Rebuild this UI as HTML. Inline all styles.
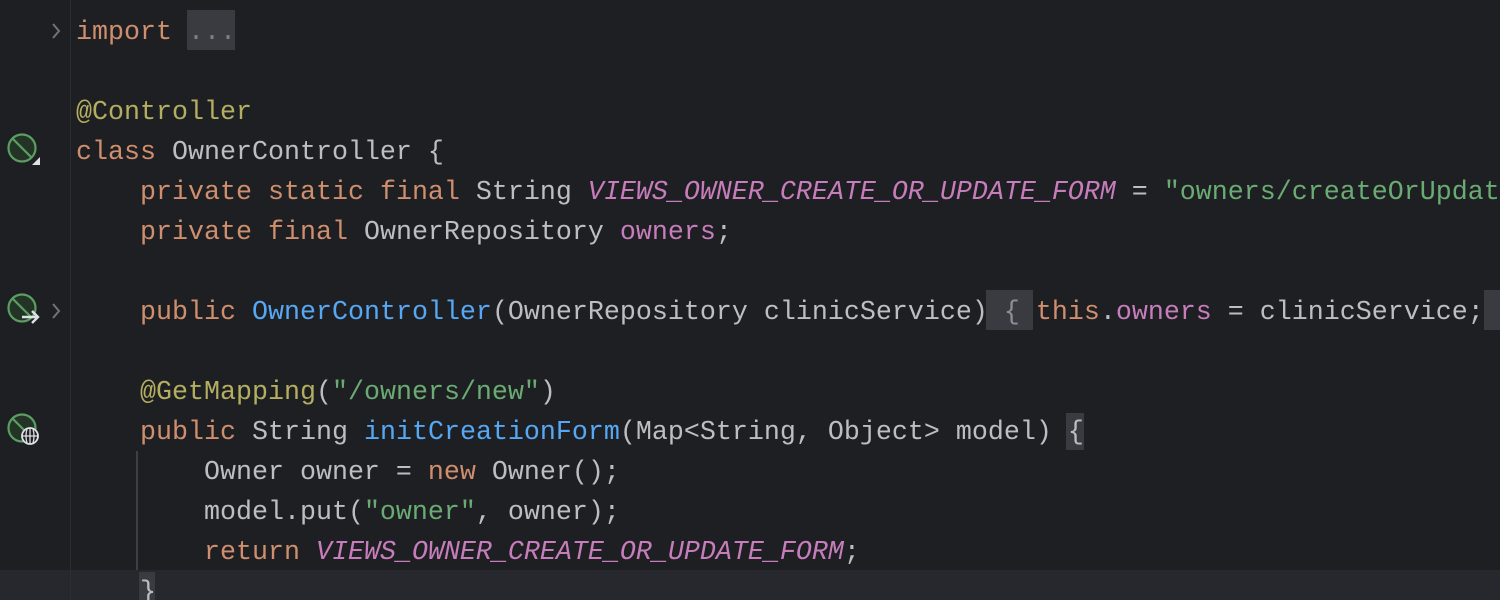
<!DOCTYPE html>
<html><head><meta charset="utf-8"><style>
html,body{margin:0;padding:0;width:1500px;height:600px;overflow:hidden;}
body{background:#1e1f22;position:relative;font-family:"Liberation Mono",monospace;}
.wrap{position:absolute;left:0;top:0;width:1500px;height:600px;overflow:hidden;}
.gut{position:absolute;left:0;top:0;width:70px;height:600px;background:#1e1f22;}
.div{position:absolute;left:70px;top:0;width:1px;height:600px;background:#2b2d30;}
.cur{position:absolute;left:0;top:570px;width:1500px;height:30px;background:#26282e;}
.l{position:absolute;left:76px;height:40px;line-height:40px;font-size:26.67px;color:#bcbec4;white-space:pre;}
.k{color:#cf8e6d}.a{color:#b3ae60}.c{color:#c77dbb;font-style:italic}.s{color:#6aab73}.f{color:#56a8f5}.p{color:#c77dbb}
.box{position:absolute;background:#393b40;}
.guide{position:absolute;left:136px;top:451px;width:2px;height:119px;background:#3d3f44;}
svg{position:absolute;}
</style></head><body><div class="wrap">
<div class="gut"></div>
<div class="cur"></div>
<div class="div"></div>
<div class="box" style="left:187px;top:10px;width:48px;height:40px"></div>
<div class="box" style="left:986px;top:290px;width:47px;height:40px"></div>
<div class="box" style="left:1484px;top:290px;width:16px;height:40px"></div>
<div class="box" style="left:1066px;top:413px;width:18px;height:37px"></div>
<div class="box" style="left:139px;top:572px;width:16px;height:28px"></div>
<div class="guide"></div>

<svg style="left:48px;top:20px" width="16" height="22"><path d="M5 4 L11 11 L5 18" stroke="#6f737a" stroke-width="2" fill="none"/></svg>
<svg style="left:48px;top:300px" width="16" height="22"><path d="M5 4 L11 11 L5 18" stroke="#6f737a" stroke-width="2" fill="none"/></svg>

<svg style="left:6px;top:132px" width="36" height="36"><circle cx="16" cy="16" r="13.5" fill="#233326" stroke="#5a9e63" stroke-width="2.2"/><path d="M7 7 L25 25" stroke="#5a9e63" stroke-width="2.2"/><path d="M34 25 L34 33 L26 33 Z" fill="#dfe1e5"/></svg>
<svg style="left:6px;top:292px" width="36" height="36"><circle cx="16" cy="16" r="13.5" fill="#233326" stroke="#5a9e63" stroke-width="2.2"/><path d="M7 7 L25 25" stroke="#5a9e63" stroke-width="2.2"/><path d="M16 25 H32 M26 19 L32 25 L26 31" stroke="#dfe1e5" stroke-width="2.4" fill="none"/></svg>
<svg style="left:6px;top:412px" width="36" height="36"><circle cx="16" cy="16" r="13.5" fill="#233326" stroke="#5a9e63" stroke-width="2.2"/><path d="M7 7 L25 25" stroke="#5a9e63" stroke-width="2.2"/><circle cx="24" cy="24" r="8" fill="#1e1f22" stroke="#dfe1e5" stroke-width="1.8"/><path d="M16 24 H32 M24 16 V32 M21 17 Q19 24 21 31 M27 17 Q29 24 27 31" stroke="#dfe1e5" stroke-width="1.3" fill="none"/></svg>

<div class="l" style="top:13px"><span class="k">import</span> <span style="color:#7a7e85">...</span></div>
<div class="l a" style="top:93px">@Controller</div>
<div class="l" style="top:133px"><span class="k">class</span> OwnerController {</div>
<div class="l" style="top:173px">    <span class="k">private static final</span> String <span class="c">VIEWS_OWNER_CREATE_OR_UPDATE_FORM</span> = <span class="s">"owners/createOrUpdat</span></div>
<div class="l" style="top:213px">    <span class="k">private final</span> OwnerRepository <span class="p">owners</span>;</div>
<div class="l" style="top:293px">    <span class="k">public</span> <span class="f">OwnerController</span>(OwnerRepository clinicService) <span style="color:#8c9096">{</span> <span class="k">this</span>.<span class="p">owners</span> = clinicService;</div>
<div class="l" style="top:373px">    <span class="a">@GetMapping</span>(<span class="s">"/owners/new"</span>)</div>
<div class="l" style="top:413px">    <span class="k">public</span> String <span class="f">initCreationForm</span>(Map&lt;String, Object&gt; model) {</div>
<div class="l" style="top:453px">        Owner owner = <span class="k">new</span> Owner();</div>
<div class="l" style="top:493px">        model.put(<span class="s">"owner"</span>, owner);</div>
<div class="l" style="top:533px">        <span class="k">return</span> <span class="c">VIEWS_OWNER_CREATE_OR_UPDATE_FORM</span>;</div>
<div class="l" style="top:573px">    }</div>
</div></body></html>
